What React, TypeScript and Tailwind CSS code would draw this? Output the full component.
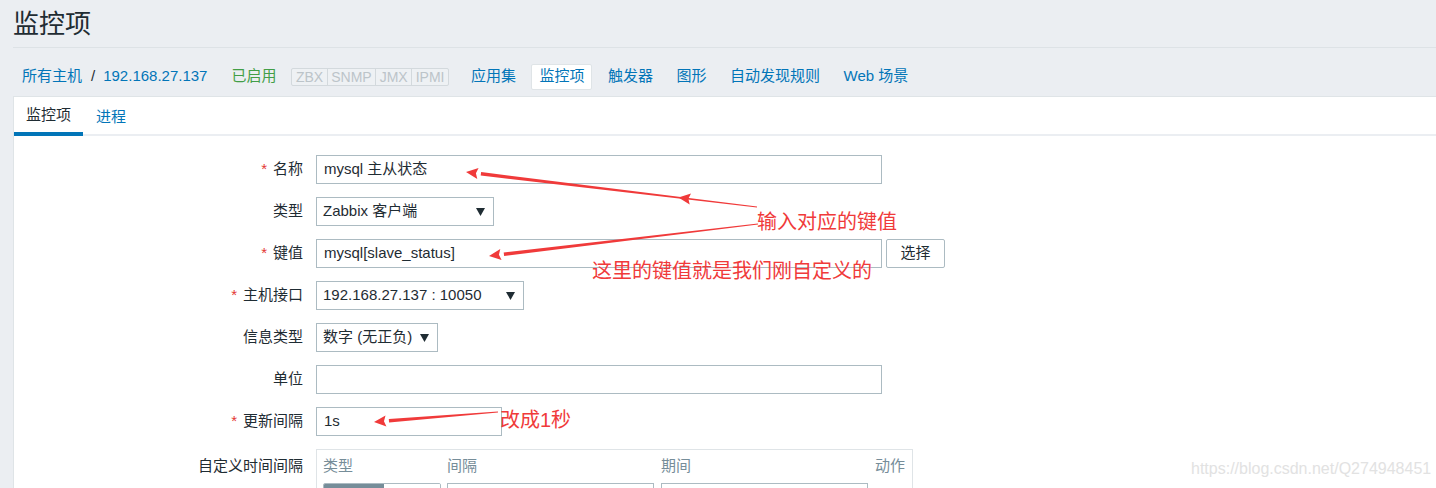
import React from "react";

const RED = "#f03a3a";

function Caret() {
  return (
    <svg width="9" height="8" viewBox="0 0 9 8" className="shrink-0">
      <polygon points="0,0 9,0 4.5,8" fill="#1f2c33" />
    </svg>
  );
}

function Row({
  label,
  required,
  children,
  top,
}: {
  label: string;
  required?: boolean;
  children: React.ReactNode;
  top?: boolean;
}) {
  return (
    <div className={`flex ${top ? "items-start" : "items-center"}`}>
      <div
        className={`w-[302px] shrink-0 pr-[13px] text-right text-[15px] text-[#1f2c33] ${
          top ? "pt-[6px]" : ""
        }`}
      >
        {required && <span className="mr-[6px] text-[#e33734]">*</span>}
        {label}
      </div>
      {children}
    </div>
  );
}

function Input({ w, value }: { w: string; value?: string }) {
  return (
    <div
      className={`${w} flex h-[29px] items-center border border-[#acbbc2] bg-white px-[7px] text-[15px] text-[#1f2c33]`}
    >
      {value}
    </div>
  );
}

function Select({ w, value }: { w: string; value: string }) {
  return (
    <div
      className={`${w} flex h-[29px] items-center justify-between border border-[#acbbc2] bg-white pl-[6px] pr-[8px] text-[15px] text-[#1f2c33]`}
    >
      <span>{value}</span>
      <Caret />
    </div>
  );
}

function Arrow({
  x1,
  y1,
  x2,
  y2,
  extraHead,
}: {
  x1: number;
  y1: number;
  x2: number;
  y2: number;
  extraHead?: number;
}) {
  const dx = x2 - x1;
  const dy = y2 - y1;
  const len = Math.hypot(dx, dy);
  const ux = dx / len;
  const uy = dy / len;
  const px = -uy;
  const py = ux;
  const headLen = 15;
  const headW = 5.5;
  const bx = x2 - ux * headLen;
  const by = y2 - uy * headLen;
  const w0 = 0.4;
  const w1 = 1.8;
  const body = [
    [x1 + px * w0, y1 + py * w0],
    [bx + px * w1, by + py * w1],
    [bx - px * w1, by - py * w1],
    [x1 - px * w0, y1 - py * w0],
  ]
    .map((p) => p.join(","))
    .join(" ");
  const head = (tx: number, ty: number) => {
    const hx = tx - ux * headLen;
    const hy = ty - uy * headLen;
    return [
      [tx, ty],
      [hx + px * headW + ux * 3, hy + py * headW + uy * 3],
      [hx + ux * 5, hy + uy * 5],
      [hx - px * headW + ux * 3, hy - py * headW + uy * 3],
    ]
      .map((p) => p.join(","))
      .join(" ");
  };
  let extra: string | null = null;
  if (extraHead !== undefined) {
    const tx = x1 + dx * extraHead;
    const ty = y1 + dy * extraHead;
    extra = head(tx, ty);
  }
  return (
    <g fill={RED}>
      <polygon points={body} />
      <polygon points={head(x2, y2)} />
      {extra && <polygon points={extra} />}
    </g>
  );
}

export default function App() {
  const navItems = ["应用集", "监控项", "触发器", "图形", "自动发现规则", "Web 场景"];
  return (
    <div className="relative h-[488px] w-[1436px] overflow-hidden bg-[#ebeef2] font-['Liberation_Sans','Noto_Sans_CJK_SC',sans-serif] text-[#1f2c33]">
      {/* Header */}
      <div className="ml-[13px] flex h-[48px] items-center border-b border-[#dde2e6]">
        <h1 className="text-[26px] leading-none text-[#1f2c33]">监控项</h1>
      </div>

      {/* Breadcrumb / nav */}
      <div className="ml-[13px] flex h-[48px] items-center pl-[9px] pt-[9px] text-[15px]">
        <span className="text-[#0275b8]">所有主机</span>
        <span className="ml-[9px] mr-[8px] text-[#1f2c33]">/</span>
        <span className="text-[#0275b8]">192.168.27.137</span>
        <span className="ml-[24px] text-[#429e47]">已启用</span>
        <div className="ml-[15px] flex h-[18px] items-stretch rounded-[2px] border border-[#d3d9dd] bg-[#eef1f4] text-[14px] leading-[16px] text-[#bcc4c9]">
          <span className="border-r border-[#d3d9dd] px-[3.5px]">ZBX</span>
          <span className="border-r border-[#d3d9dd] px-[3.5px]">SNMP</span>
          <span className="border-r border-[#d3d9dd] px-[3.5px]">JMX</span>
          <span className="px-[3.5px]">IPMI</span>
        </div>
        <div className="ml-[14px] flex items-center gap-[7.5px]">
          {navItems.map((t, i) => (
            <span
              key={t}
              className={`flex h-[26px] items-center rounded-[2px] border px-[7px] text-[#0275b8] ${
                i === 1 ? "border-[#dfe4e7] bg-white" : "border-transparent"
              }`}
            >
              {t}
            </span>
          ))}
        </div>
      </div>

      {/* Panel */}
      <div className="ml-[13px] h-[400px] border-l border-t border-[#dfe4e7] bg-white">
        <div className="flex h-[39px] border-b-2 border-[#ebeef2] text-[15px]">
          <div className="-mb-[2px] flex h-[39px] items-center border-b-4 border-[#0275b8] px-[12px] pt-[1px] text-[#1f2c33]">
            监控项
          </div>
          <div className="flex h-[37px] items-center px-[13px] pt-[3px] text-[#0275b8]">进程</div>
        </div>

        <div className="flex flex-col gap-[13px] pt-[19px]">
          <Row label="名称" required>
            <Input w="w-[566px]" value="mysql 主从状态" />
          </Row>
          <Row label="类型">
            <Select w="w-[178px]" value="Zabbix 客户端" />
          </Row>
          <Row label="键值" required>
            <Input w="w-[566px]" value="mysql[slave_status]" />
            <div className="ml-[4px] flex h-[29px] w-[59px] items-center justify-center rounded-[2px] border border-[#acbbc2] bg-white text-[15px] text-[#1f2c33]">
              选择
            </div>
          </Row>
          <Row label="主机接口" required>
            <Select w="w-[208px]" value="192.168.27.137 : 10050" />
          </Row>
          <Row label="信息类型">
            <Select w="w-[122px]" value="数字 (无正负)" />
          </Row>
          <Row label="单位">
            <Input w="w-[566px]" />
          </Row>
          <Row label="更新间隔" required>
            <Input w="w-[186px]" value="1s" />
          </Row>
          <Row label="自定义时间间隔" top>
            <div className="w-[597px] border border-[#dfe4e7] px-[6px] pt-[7px]">
              <div className="flex h-[18px] items-center text-[15px] leading-[18px] text-[#768d99]">
                <span className="w-[124px]">类型</span>
                <span className="w-[214px]">间隔</span>
                <span className="w-[214px]">期间</span>
                <span>动作</span>
              </div>
              <div className="mt-[8px] flex">
                <div className="flex h-[29px] w-[118px] overflow-hidden rounded-[2px] border border-[#acbbc2]">
                  <div className="w-[60px] bg-[#768d99]" />
                  <div className="flex-1 bg-white" />
                </div>
                <div className="ml-[6px] h-[29px] w-[207px] border border-[#acbbc2]" />
                <div className="ml-[7px] h-[29px] w-[207px] border border-[#acbbc2]" />
              </div>
            </div>
          </Row>
        </div>
      </div>

      {/* Annotations overlay */}
      <svg
        className="pointer-events-none absolute left-0 top-0"
        width="1436"
        height="488"
        viewBox="0 0 1436 488"
      >
        <Arrow x1={757} y1={207} x2={466} y2={172} extraHead={0.27} />
        <Arrow x1={758} y1={224} x2={489} y2={256} />
        <Arrow x1={498} y1={412} x2={374} y2={422} />
      </svg>
      <div className="absolute left-[757px] top-[208px] text-[20px] leading-[28px] text-[#f03a3a]">
        输入对应的键值
      </div>
      <div className="absolute left-[592px] top-[257px] text-[20px] leading-[28px] text-[#f03a3a]">
        这里的键值就是我们刚自定义的
      </div>
      <div className="absolute left-[500px] top-[406px] text-[20px] leading-[28px] text-[#f03a3a]">
        改成1秒
      </div>
      <div className="absolute left-[1191px] top-[458px] text-[16px] leading-[22px] text-[#e2e2e2]">
        https://blog.csdn.net/Q274948451
      </div>
    </div>
  );
}
